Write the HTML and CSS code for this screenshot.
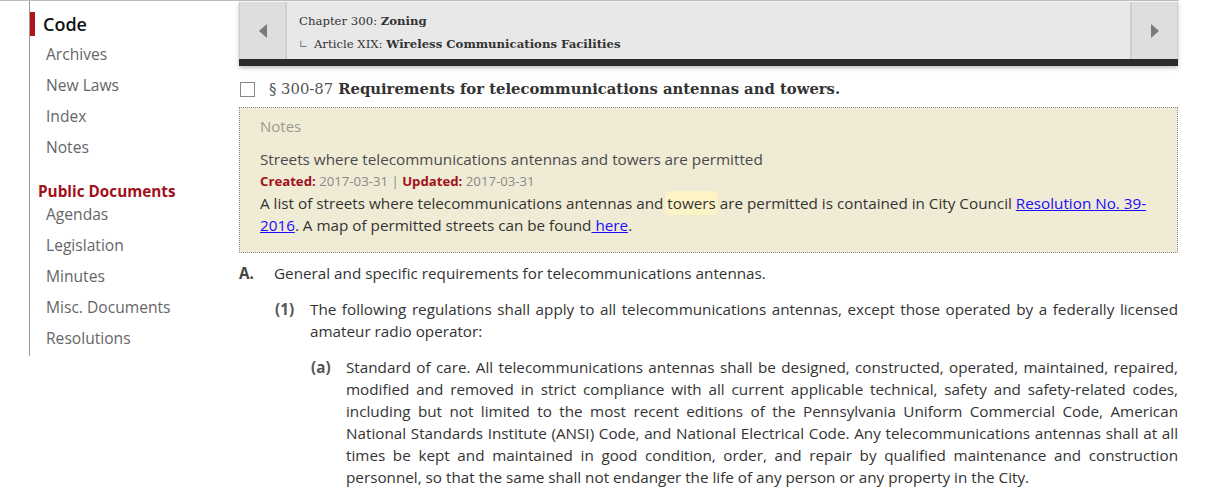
FILE: index.html
```html
<!DOCTYPE html>
<html>
<head>
<meta charset="utf-8">
<link rel="stylesheet" href="styles.css">
</head>
<body>
<div class="page">
  <nav class="sidebar">
    <div class="nav-current">Code</div>
    <a class="nav-item">Archives</a>
    <a class="nav-item">New Laws</a>
    <a class="nav-item">Index</a>
    <a class="nav-item">Notes</a>
    <div class="nav-group">Public Documents</div>
    <a class="nav-item">Agendas</a>
    <a class="nav-item">Legislation</a>
    <a class="nav-item">Minutes</a>
    <a class="nav-item">Misc. Documents</a>
    <a class="nav-item">Resolutions</a>
  </nav>
  <main class="main">
    <div class="crumbbar">
      <div class="crumbs">
        <div class="crumb-btn"><span class="tri-left"></span></div>
        <div class="crumb-text">
          <div class="crumb-line">Chapter 300: <b>Zoning</b></div>
          <div class="crumb-line sub"><span class="corner">∟</span> Article XIX: <b>Wireless Communications Facilities</b></div>
        </div>
        <div class="crumb-btn right"><span class="tri-right"></span></div>
      </div>
      <div class="crumb-foot"></div>
    </div>
    <h1 class="title"><span class="check"></span><span class="secnum">§ 300-87</span> <b>Requirements for telecommunications antennas and towers.</b></h1>
    <div class="notes">
      <div class="notes-label">Notes</div>
      <div class="note-title">Streets where telecommunications antennas and towers are permitted</div>
      <div class="note-meta"><b>Created:</b> 2017-03-31 | <b>Updated:</b> 2017-03-31</div>
      <div class="note-body">A list of streets where telecommunications antennas and <span class="hl">towers</span> are permitted is contained in City Council <a href="#">Resolution No. 39-2016</a>. A map of permitted streets can be found<a href="#"> here</a>.</div>
    </div>
    <div class="para lvl0"><span class="num">A.</span><div class="txt">General and specific requirements for telecommunications antennas.</div></div>
    <div class="para lvl1"><span class="num">(1)</span><div class="txt">The following regulations shall apply to all telecommunications antennas, except those operated by a federally licensed amateur radio operator:</div></div>
    <div class="para lvl2"><span class="num">(a)</span><div class="txt">Standard of care. All telecommunications antennas shall be designed, constructed, operated, maintained, repaired, modified and removed in strict compliance with all current applicable technical, safety and safety-related codes, including but not limited to the most recent editions of the Pennsylvania Uniform Commercial Code, American National Standards Institute (ANSI) Code, and National Electrical Code. Any telecommunications antennas shall at all times be kept and maintained in good condition, order, and repair by qualified maintenance and construction personnel, so that the same shall not endanger the life of any person or any property in the City.</div></div>
  </main>
</div>
</body>
</html>
```
FILE: styles.css
```css
html, body { margin: 0; padding: 0; background: #fff; }
body { font-family: "Open Sans", sans-serif; color: #333; overflow: hidden; height: 501px; }
.page {
  display: flex;
  border-top: 1px solid #bdbdbd;
  width: 1179px;
}
.sidebar {
  width: 200px;
  margin-left: 29px;
  border-left: 1px solid #999;
  height: 355px;
  display: flex;
  flex-direction: column;
  padding-top: 11px;
  box-sizing: border-box;
  flex-shrink: 0;
}
.nav-current {
  font-size: 18px;
  font-weight: 600;
  color: #111;
  border-left: 5px solid #b0151b;
  padding-left: 8px;
  line-height: 24px;
  height: 24px;
  margin-bottom: 3px;
}
.nav-item {
  font-size: 15.6px;
  color: #666;
  padding-left: 16px;
  line-height: 31px;
  height: 31px;
}
.nav-group {
  font-size: 15.3px;
  font-weight: 700;
  color: #a0111a;
  padding-left: 8px;
  margin-top: 18px;
  line-height: 20px;
}
.nav-group + .nav-item { margin-top: -2px; }
.main {
  margin-left: 10px;
  width: 939px;
  flex-shrink: 0;
}
.crumbbar {
  margin-top: 1px;
  box-shadow: 0 2px 4px rgba(0,0,0,0.25);
}
.crumbs {
  display: flex;
  background: #e8e8e8;
  height: 57px;
  border-left: 1px solid #ccc;
  border-right: 1px solid #ccc;
}
.crumb-btn {
  width: 45px;
  background: #dedede;
  border-right: 2px solid #cfcfcf;
  display: flex;
  align-items: center;
  justify-content: center;
  flex-shrink: 0;
}
.crumb-btn.right { border-right: none; border-left: 2px solid #cfcfcf; }
.tri-left {
  width: 0; height: 0;
  border-top: 7px solid transparent;
  border-bottom: 7px solid transparent;
  border-right: 8px solid #7a7a7a;
}
.tri-right {
  width: 0; height: 0;
  border-top: 7px solid transparent;
  border-bottom: 7px solid transparent;
  border-left: 8px solid #7a7a7a;
}
.crumb-text {
  flex: 1;
  padding: 9px 0 0 12px;
  font-family: "DejaVu Serif", serif;
  font-size: 11.7px;
  color: #333;
}
.crumb-line { line-height: 20px; height: 23px; }
.crumb-line b { font-weight: 700; }
.corner { color: #777; font-family: "DejaVu Sans", sans-serif; font-size: 11px; margin-right: 2px; }
.crumb-foot { height: 7px; background: #2b2b2b; }
.title {
  margin: 13px 0 0 0;
  font-family: "DejaVu Serif", serif;
  font-size: 14.8px;
  font-weight: 400;
  color: #333;
  display: flex;
  align-items: center;
  line-height: 20px;
}
.check {
  width: 13px; height: 13px;
  border: 1px solid #888;
  background: #fff;
  margin-right: 14px;
  margin-left: 1px;
  flex-shrink: 0;
}
.secnum { color: #555; margin-right: 5px; }
.title b { font-weight: 700; color: #333; }
.notes {
  margin-top: 8px;
  background: #f0ebd5;
  border: 1px dotted #8f8f8f;
  padding: 8px 20px 16px 20px;
  font-family: "Open Sans", sans-serif;
  font-size: 15.25px;
  color: #333;
}
.notes-label { color: #9a9a90; font-size: 15px; line-height: 20px; margin-bottom: 12px; }
.note-title { line-height: 22px; color: #4a4a4a; }
.note-meta { font-size: 13.2px; line-height: 22px; color: #888; }
.note-meta b { color: #a0111a; font-weight: 700; }
.note-body { line-height: 22px; }
.note-body a { color: #1a0dff; }
.hl { background: #fdf4c6; border-radius: 3px; box-shadow: 0 0 0 2px #fdf4c6; }
.para {
  display: flex;
  font-family: "Open Sans", sans-serif;
  font-size: 15.25px;
  color: #333;
  line-height: 22px;
}
.para .num { width: 35px; flex-shrink: 0; font-weight: 700; color: #555; }
.para .txt { flex: 1; text-align: justify; }
.lvl0 { margin-top: 9px; }
.lvl0 .num { color: #444; }
.lvl1 { margin-top: 14px; padding-left: 36px; }
.lvl2 { margin-top: 14px; padding-left: 72px; }
```
